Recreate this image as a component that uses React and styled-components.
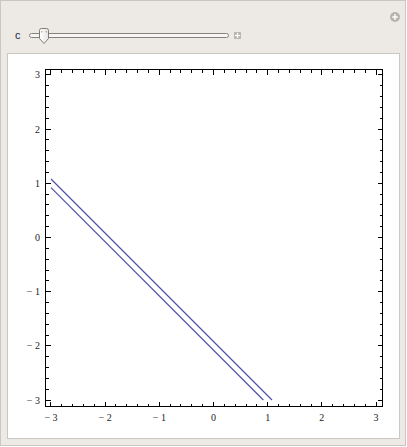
import React from "react"
import styled, { createGlobalStyle } from "styled-components"

const GlobalStyle = createGlobalStyle`
  body {
    margin: 0;
    background: #ffffff;
  }
`

const Panel = styled.div`
  width: 406px;
  height: 446px;
  box-sizing: border-box;
  border: 1px solid #cac7c2;
  background: #edeae6;
  padding: 0 5px 6px 6px;
  display: flex;
  flex-direction: column;
`

const TopRow = styled.div`
  height: 22px;
  box-sizing: border-box;
  padding-top: 11px;
  display: flex;
  justify-content: flex-end;
`

const ControlRow = styled.div`
  height: 16px;
  margin-top: 4px;
  display: flex;
  align-items: center;
`

const Label = styled.span`
  font-family: "Liberation Sans", Arial, sans-serif;
  font-size: 11px;
  color: #1d2440;
  margin-left: 8px;
  width: 14px;
  line-height: 16px;
`

const Track = styled.div`
  position: relative;
  width: 200px;
  height: 5px;
  box-sizing: border-box;
  border: 1px solid #86837f;
  border-radius: 3px;
  background: #f7f6f4;
`

const Thumb = styled.svg`
  position: absolute;
  left: 8px;
  top: -6px;
  width: 12px;
  height: 16px;
`

const PlusBox = styled.svg`
  width: 7px;
  height: 7px;
  margin-left: 5px;
  margin-top: 1px;
`

const Output = styled.div`
  flex: 1;
  margin-top: 10px;
  background: #ffffff;
  border: 1px solid #cbc8c3;
`

const Plot = styled.svg`
  display: block;
  width: 391px;
  height: 384px;
`

const TickLabel = styled.text`
  font-family: "Liberation Serif", "Times New Roman", serif;
  font-size: 10px;
  fill: #1a1a1a;
`

const X = (v) => 213.5 + v * 54.17
const Y = (v) => 237.5 - v * 54.17
const snap = (p) => Math.floor(p) + 0.5

const left = 45.5
const right = 382.5
const top = 69.5
const bottom = 406.5

function ticks() {
  const out = []
  for (let i = -15; i <= 15; i++) {
    const v = i / 5
    const major = i % 5 === 0
    const len = major ? 5 : 3
    const x = snap(X(v))
    const y = snap(Y(v))
    out.push(<line key={`b${i}`} x1={x} y1={bottom} x2={x} y2={bottom - len} />)
    out.push(<line key={`t${i}`} x1={x} y1={top} x2={x} y2={top + len} />)
    out.push(<line key={`l${i}`} x1={left} y1={y} x2={left + len} y2={y} />)
    out.push(<line key={`r${i}`} x1={right} y1={y} x2={right - len} y2={y} />)
  }
  return out
}

const fmt = (v) => (v < 0 ? `\u2212 ${-v}` : `${v}`)

export default function App() {
  const values = [-3, -2, -1, 0, 1, 2, 3]
  const c = 0.08
  // contour lines y = -x - 2 ± c, clipped to the [-3, 3] square
  const line = (k) => ({ x1: X(-3), y1: Y(1 + k), x2: X(1 + k), y2: Y(-3) })
  const l1 = line(c)
  const l2 = line(-c)

  return (
    <>
      <GlobalStyle />
      <Panel>
        <TopRow>
          <svg width="10" height="10" viewBox="0 0 10 10">
            <circle cx="5" cy="5" r="5" fill="#b7b4b0" />
            <path d="M5 2.2 V7.8 M2.2 5 H7.8" stroke="#fff" strokeWidth="1.6" />
          </svg>
        </TopRow>
        <ControlRow>
          <Label>c</Label>
          <Track>
            <Thumb viewBox="0 0 12 16">
              <defs>
                <linearGradient id="tg" x1="0" y1="0" x2="1" y2="0">
                  <stop offset="0" stopColor="#ffffff" />
                  <stop offset="1" stopColor="#e6e4e1" />
                </linearGradient>
              </defs>
              <path
                d="M1.5 2.5 Q1.5 0.5 3.5 0.5 H8.5 Q10.5 0.5 10.5 2.5 V10.5 L6 15.5 L1.5 10.5 Z"
                fill="url(#tg)"
                stroke="#7f7c78"
              />
              <path d="M3.5 4.5 V3.5 H4.5 M8.5 4.5 V3.5 H7.5" stroke="#a8a5a1" fill="none" />
            </Thumb>
          </Track>
          <PlusBox viewBox="0 0 7 7">
            <rect width="7" height="7" fill="#bbb8b4" />
            <path d="M3.5 1 V6 M1 3.5 H6" stroke="#fff" strokeWidth="1.2" />
          </PlusBox>
        </ControlRow>
        <Output>
          <Plot viewBox="8 54 391 384">
            <g stroke="#000" strokeWidth="1" fill="none" shapeRendering="crispEdges">
              <rect x={left} y={top} width={right - left} height={bottom - top} />
              {ticks()}
            </g>
            <g stroke="#5252aa" strokeWidth="1.25" fill="none">
              <line {...l1} />
              <line {...l2} />
            </g>
            {values.map((v) => (
              <TickLabel key={`y${v}`} x={40} y={Y(v) + 3.5} textAnchor="end">
                {fmt(v)}
              </TickLabel>
            ))}
            {values.map((v) => (
              <TickLabel key={`x${v}`} x={X(v)} y={420.5} textAnchor="middle">
                {fmt(v)}
              </TickLabel>
            ))}
          </Plot>
        </Output>
      </Panel>
    </>
  )
}
